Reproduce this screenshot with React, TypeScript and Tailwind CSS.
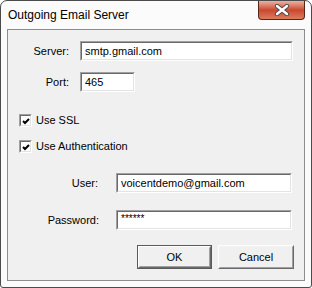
import React from "react";

const font = { fontFamily: '"Liberation Sans", Arial, sans-serif' };

function Sunken({ className, children }: { className?: string; children?: React.ReactNode }) {
  return (
    <div className={`border border-t-[#a0a0a0] border-l-[#a0a0a0] border-b-white border-r-white ${className ?? ""}`}>
      <div className="h-full border border-t-[#696969] border-l-[#696969] border-b-[#e3e3e3] border-r-[#e3e3e3] bg-white">
        {children}
      </div>
    </div>
  );
}

function TextBox({ value, width, top }: { value: string; width: string; top?: boolean }) {
  return (
    <Sunken className={`h-[20px] ${width}`}>
      <div className={`flex h-full px-[3px] text-black ${top ? "items-start pt-[1px] text-[10px] leading-[12px]" : "items-center text-[11px] leading-[13px]"}`}>
        {value}
      </div>
    </Sunken>
  );
}

function CheckRow({ label, className }: { label: string; className?: string }) {
  return (
    <div className={`flex h-[13px] items-center pl-[11px] ${className ?? ""}`}>
      <Sunken className="h-[13px] w-[13px]">
        <svg width="11" height="11" viewBox="0 0 11 11" className="block">
          <path d="M2 5 L4 7 L8 3" stroke="#000" strokeWidth="2" fill="none" />
        </svg>
      </Sunken>
      <span className="ml-[4px] text-[11px] leading-[13px] text-black">{label}</span>
    </div>
  );
}

function Button({ label, width, isDefault }: { label: string; width: string; isDefault?: boolean }) {
  return (
    <div className={`h-[24px] ${width} ${isDefault ? "border border-[#5a5a5a]" : ""}`}>
      <div className="h-full border border-t-white border-l-white border-b-[#696969] border-r-[#696969]">
        <div className="flex h-full items-center justify-center border border-t-[#f0f0f0] border-l-[#f0f0f0] border-b-[#a0a0a0] border-r-[#a0a0a0] bg-[#f0f0f0] text-[11px] text-black">
          {label}
        </div>
      </div>
    </div>
  );
}

export default function App() {
  return (
    <div className="h-[288px] w-[312px] bg-white" style={font}>
      <div className="flex h-full w-full flex-col rounded-t-[7px] rounded-b-[3px] border border-[#4b4b4b] bg-[#fbfbfb] px-[6px] pb-[6px]">
        <div className="flex h-[28px] items-start justify-between">
          <span className="mt-[6px] ml-[1px] text-[12px] leading-[16px] text-black">Outgoing Email Server</span>
          <div className="flex h-[19px] w-[47px] items-center justify-center rounded-b-[4px] border border-t-0 border-[#5c2317] bg-gradient-to-b from-[#eab2a2] via-[#c9472f] to-[#dc7a5e]">
            <svg width="16" height="12" viewBox="0 0 16 12">
              <path d="M3 2 L13 10 M13 2 L3 10" stroke="#4a4a4a" strokeWidth="4.2" strokeLinecap="round" />
              <path d="M3 2 L13 10 M13 2 L3 10" stroke="#ffffff" strokeWidth="2.4" strokeLinecap="round" />
            </svg>
          </div>
        </div>
        <div className="flex flex-1 flex-col border border-[#8d8d8d] bg-[#f0f0f0] pr-[10px]">
          <div className="mt-[11px] flex items-center">
            <span className="w-[61px] text-right text-[11px] text-black">Server:</span>
            <div className="ml-[11px]">
              <TextBox value="smtp.gmail.com" width="w-[213px]" />
            </div>
          </div>
          <div className="mt-[11px] flex items-center">
            <span className="w-[61px] text-right text-[11px] text-black">Port:</span>
            <div className="ml-[11px]">
              <TextBox value="465" width="w-[55px]" />
            </div>
          </div>
          <CheckRow label="Use SSL" className="mt-[22px]" />
          <CheckRow label="Use Authentication" className="mt-[13px]" />
          <div className="mt-[20px] flex items-center">
            <span className="w-[90px] text-right text-[11px] text-black">User:</span>
            <div className="ml-[18px]">
              <TextBox value="voicentdemo@gmail.com" width="w-[176px]" />
            </div>
          </div>
          <div className="mt-[17px] flex items-center">
            <span className="w-[91px] text-right text-[11px] text-black">Password:</span>
            <div className="ml-[17px]">
              <TextBox value="******" width="w-[176px]" top />
            </div>
          </div>
          <div className="mt-[15px] flex justify-end gap-[6px]">
            <Button label="OK" width="w-[75px]" isDefault />
            <Button label="Cancel" width="w-[76px]" />
          </div>
        </div>
      </div>
    </div>
  );
}
